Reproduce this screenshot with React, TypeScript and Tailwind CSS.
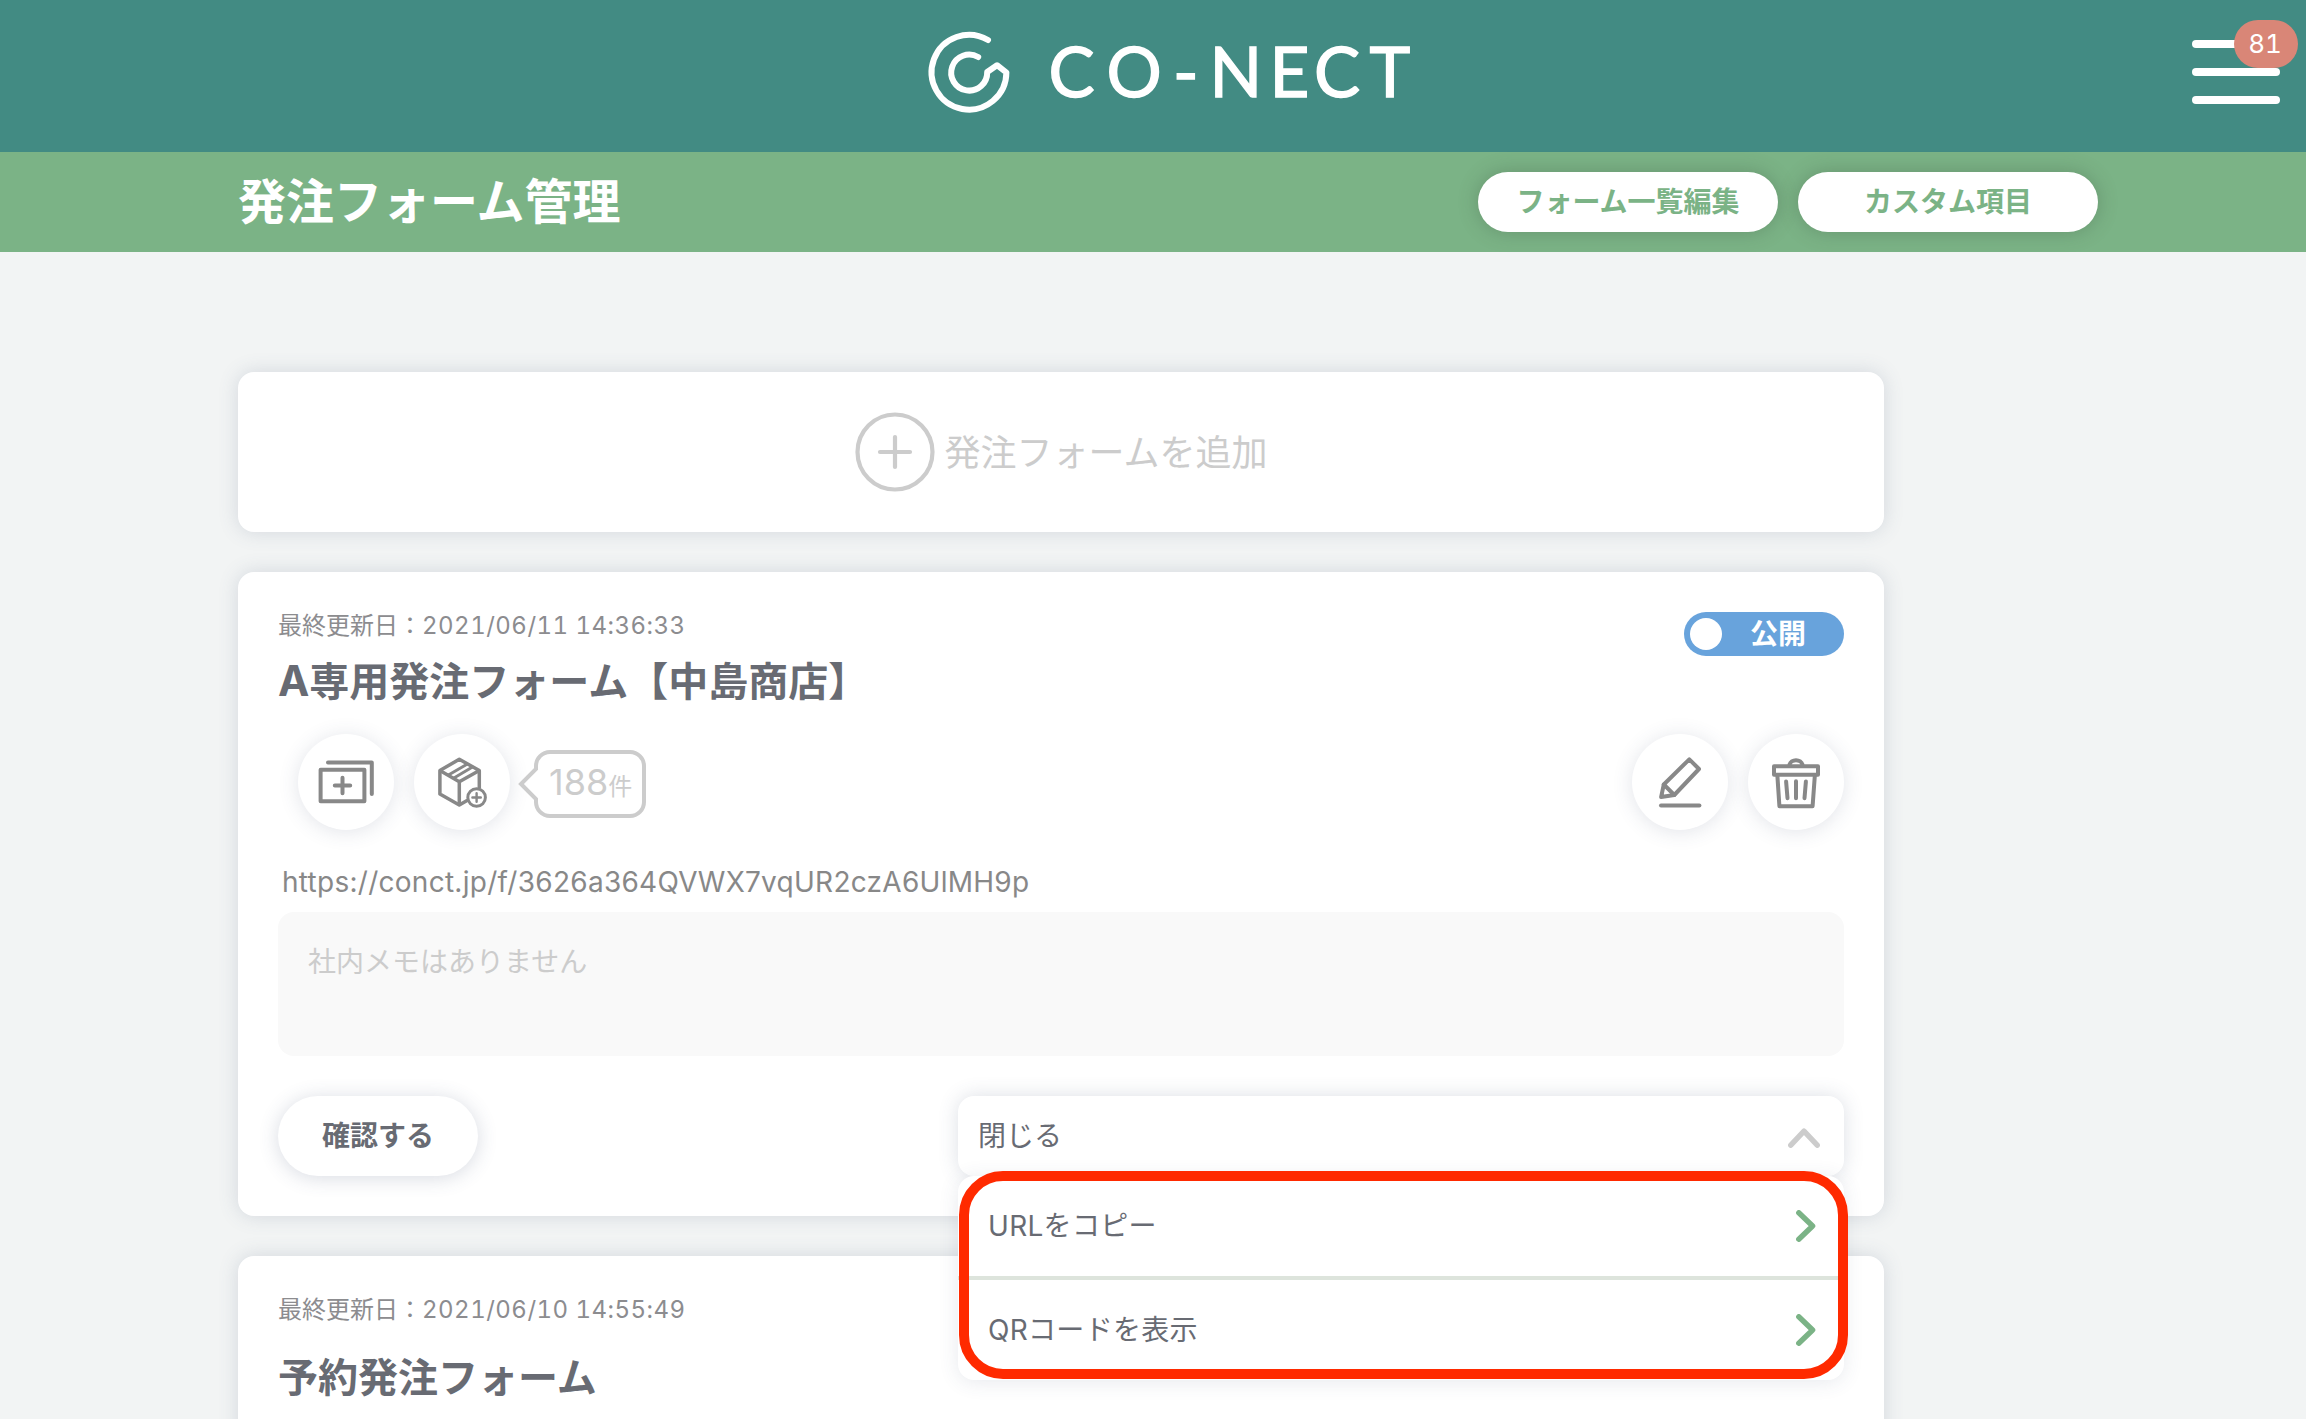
import type { ReactNode } from "react";

const Logo = () => (
  <svg className="overflow-visible" width="482" height="80" viewBox="0 0 482 80" fill="none">
    <path
      d="M60 8A37.4 37.4 0 1 0 78.4 40.5L69 33.2L59.2 40A18 18 0 1 1 50.2 25"
      stroke="#fff"
      strokeWidth="6"
      strokeLinecap="round"
      strokeLinejoin="round"
    />
    <text
      x="120.5 178.5 245 281.5 341.5 386 441.5"
      y="64.6"
      fill="#fff"
      fontSize="69"
      fontWeight="400"
      fontFamily="Lato, sans-serif"
      stroke="#fff"
      strokeWidth="1.4"
    >
      CO-NECT
    </text>
  </svg>
);

const CopyIcon = () => (
  <svg className="size-24" viewBox="0 0 96 96" fill="none" stroke="#888" strokeWidth="4" strokeLinecap="round" strokeLinejoin="round">
    <path d="M30 28.6H73.8V60" />
    <path d="M22.6 35.8H66.4V67.2H22.6Z" />
    <path d="M44.5 43.8V59.2M36.8 51.5H52.2" />
  </svg>
);

const BoxIcon = () => (
  <svg className="size-24" viewBox="0 0 96 96" fill="none" stroke="#888" strokeWidth="3.5" strokeLinejoin="round">
    <path d="M65.3 54V36.5L45.3 25.3L25.9 36.5V60L45.3 71L53.5 66.2" />
    <path d="M25.9 36.5L45.3 47.7L65.3 36.5M45.3 47.7V71" />
    <path d="M34 41.2L53.4 30M39.5 44.2L58.5 33" strokeWidth="3" />
    <circle cx="62.6" cy="63.5" r="8.8" strokeWidth="3" />
    <path d="M62.6 59.3V67.7M58.4 63.5H66.8" strokeWidth="2.4" strokeLinecap="round" />
  </svg>
);

const EditIcon = () => (
  <svg className="size-24" viewBox="0 0 96 96" fill="none" stroke="#888" strokeWidth="4" strokeLinecap="round" strokeLinejoin="round">
    <path d="M57.3 25.3L67 35L42.3 61L31.8 50.5Z" />
    <path d="M31.8 50.5L29.1 63.1L42.3 61" />
    <path d="M29 71.4H67.4" />
  </svg>
);

const TrashIcon = () => (
  <svg className="size-24" viewBox="0 0 96 96" fill="none" stroke="#888" strokeWidth="4" strokeLinecap="round" strokeLinejoin="round">
    <path d="M26 32.3H70V40.7H26Z" />
    <path d="M41.5 31C42.5 24.5 53.5 24.5 54.5 31" />
    <path d="M29.4 42L31.4 72.2H64.6L66.8 42" />
    <path d="M48 47.2V64.2M38.1 47.5L39.5 64.2M57.9 47.5L56.5 64.2" />
  </svg>
);

const RightArrow = () => (
  <svg width="20" height="32" viewBox="0 0 20 32" fill="none" stroke="#7bb386" strokeWidth="5.4" strokeLinecap="round" strokeLinejoin="round">
    <path d="M2.8 2.8L16.6 16L2.8 29.2" />
  </svg>
);

const IconButton = ({ children }: { children: ReactNode }) => (
  <button className="size-24 rounded-full bg-white shadow-[0_2px_20px_rgba(60,75,110,0.15)]">
    {children}
  </button>
);

const HeaderButton = ({ label }: { label: string }) => (
  <button className="flex h-15 w-75 items-center justify-center rounded-full bg-white text-[28px] leading-none font-bold text-[#7bb386] shadow-[0_0_20px_rgba(60,80,60,0.32)]">
    {label}
  </button>
);

const Card = ({ className, children }: { className: string; children: ReactNode }) => (
  <section
    className={`w-[1646px] shrink-0 rounded-2xl bg-white shadow-[0_0_20px_rgba(70,90,120,0.18)] ${className}`}
  >
    {children}
  </section>
);

const UpdatedAt = ({ date }: { date: string }) => (
  <p className="mt-0.5 flex h-6 items-center text-2xl leading-none whitespace-nowrap text-[#8c8c8f]">
    <span>最終更新日：</span>
    <span className="tracking-[0.48px] tabular-nums">{date}</span>
  </p>
);

const menuItems = ["URLをコピー", "QRコードを表示"];

const App = () => {
  return (
    <div className="h-[1419px] w-[2306px] overflow-hidden bg-[#f2f4f4] font-['Inter','Noto_Sans_CJK_JP',sans-serif] text-[#686b73]">
      {/* ヘッダー */}
      <header className="flex h-38 items-start justify-between bg-[#428b83] pr-6.5 pl-[928px]">
        <div className="pt-8">
          <Logo />
        </div>
        <div className="relative mt-10 flex w-22 flex-col gap-5">
          <span className="h-2 rounded-full bg-white" />
          <span className="h-2 rounded-full bg-white" />
          <span className="h-2 rounded-full bg-white" />
          <span className="absolute -top-5 -right-4.5 flex h-12 w-16 items-center justify-center rounded-full bg-[#d98677] pr-0.5 text-[26px] leading-none text-white tabular-nums">
            81
          </span>
        </div>
      </header>

      {/* タイトルバー */}
      <div className="flex h-25 items-center justify-between bg-[#7bb386] pr-52 pl-[238px]">
        <h1 className="text-5xl leading-none font-bold text-white">発注フォーム管理</h1>
        <div className="flex gap-5">
          <HeaderButton label="フォーム一覧編集" />
          <HeaderButton label="カスタム項目" />
        </div>
      </div>

      <main className="flex flex-col gap-10 pt-30 pl-[238px]">
        <Card className="flex h-40 items-center justify-center gap-2.5 text-[#ccc]">
          <svg className="size-20" viewBox="0 0 80 80" fill="none" stroke="#ccc" strokeWidth="4.2" strokeLinecap="round">
            <circle cx="40" cy="40" r="37.5" />
            <path d="M40 25V55M25 40H55" />
          </svg>
          <span className="pt-0.5 text-4xl leading-none">発注フォームを追加</span>
        </Card>

        <Card className="h-[644px] px-10 pt-10">
          <div className="flex h-[122px] items-start justify-between">
            <div>
              <UpdatedAt date="2021/06/11 14:36:33" />
              <h2 className="mt-5.5 text-[40px] leading-none font-bold">
                <span className="text-[42px] leading-none">A</span>専用発注フォーム【中島商店】
              </h2>
            </div>
            <div className="flex h-11 w-40 items-center rounded-full bg-[#68a3dc] pl-1.5">
              <span className="size-8 rounded-full bg-white" />
              <span className="ml-7 text-[28px] leading-none font-bold text-white">公開</span>
            </div>
          </div>

          <div className="flex h-24 items-center gap-5 pl-5">
            <IconButton>
              <CopyIcon />
            </IconButton>
            <IconButton>
              <BoxIcon />
            </IconButton>
            {/* 件数の吹き出し */}
            <div className="relative mt-1 -ml-3 h-17 w-32">
              <svg className="absolute inset-0" width="128" height="68" viewBox="0 0 128 68" fill="none" stroke="#ccc" strokeWidth="4">
                <path d="M38 2H112A14 14 0 0 1 126 16V52A14 14 0 0 1 112 66H32A14 14 0 0 1 18 52V49L3 34L18 19V16A14 14 0 0 1 32 2H40" />
              </svg>
              <p className="flex h-17 items-baseline pt-3.5 pl-[31px] leading-none text-[#ccc]">
                <span className="text-4xl leading-none">188</span>
                <span className="text-2xl leading-none">件</span>
              </p>
            </div>
            <div className="ml-auto flex gap-5">
              <IconButton>
                <EditIcon />
              </IconButton>
              <IconButton>
                <TrashIcon />
              </IconButton>
            </div>
          </div>

          <p className="flex h-[82px] items-end pb-3.5 pl-1 text-[28px] leading-8 tracking-[0.27px] text-[#888]">
            https://conct.jp/f/3626a364QVWX7vqUR2czA6UlMH9p
          </p>
          <div className="h-36 rounded-2xl bg-[#f9f9f9] px-[30px] pt-9 text-[28px] leading-none text-[#ccc]">
            社内メモはありません
          </div>

          <div className="mt-10 flex items-start justify-between">
            <button className="h-20 w-50 rounded-full bg-white text-[28px] leading-none font-bold shadow-[0_2px_20px_rgba(60,75,110,0.2)]">
              確認する
            </button>
            <div className="relative w-[886px]">
              <button className="flex h-20 w-full items-center justify-between rounded-2xl bg-white pr-6 pl-5 text-[28px] leading-none shadow-[0_0_20px_rgba(60,75,110,0.18)]">
                <span>閉じる</span>
                <svg width="32" height="20" viewBox="0 0 32 20" fill="none" stroke="#ccc" strokeWidth="5.4" strokeLinecap="round" strokeLinejoin="round" className="mt-1">
                  <path d="M2.8 17.2L16 3.2L29.2 17.2" />
                </svg>
              </button>
              <ul className="absolute top-20 left-0 z-10 w-full divide-y-4 divide-[#dde4dc] rounded-2xl bg-white shadow-[0_2px_20px_rgba(60,75,110,0.12)]">
                {menuItems.map((item) => (
                  <li key={item} className="box-content flex h-25 items-center">
                    <span className="flex-1 pb-px pl-7.5 text-[28px] leading-none tracking-[0.3px]">{item}</span>
                    <span className="pr-7">
                      <RightArrow />
                    </span>
                  </li>
                ))}
              </ul>
              {/* 強調枠 */}
              <div className="absolute top-[75px] left-px z-20 h-52 w-[889px] rounded-[44px] border-10 border-[#ff2a00]" />
            </div>
          </div>
        </Card>

        <Card className="h-80 px-10 pt-10">
          <UpdatedAt date="2021/06/10 14:55:49" />
          <h2 className="mt-9 text-[40px] leading-none font-bold">予約発注フォーム</h2>
        </Card>
      </main>
    </div>
  );
};

export default App;
